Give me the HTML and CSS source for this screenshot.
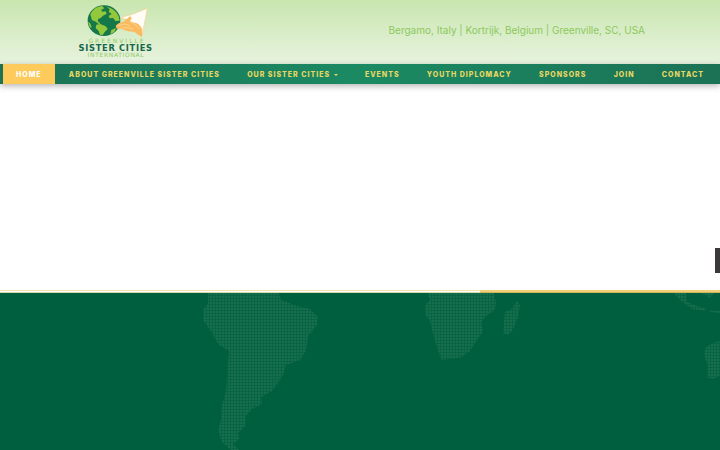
FILE: index.html
```html
<!DOCTYPE html>
<html lang="en">

<head>
    <meta charset="utf-8">
    <meta name="viewport" content="width=device-width, initial-scale=1">
    <title>Greenville Sister Cities International</title>
    <link rel="stylesheet" href="styles.css">
</head>

<body>

    <header class="header">
        <a class="logo" href="#" aria-label="Home page">
            <svg viewBox="12 0 264 192" width="88" height="64">
                <!-- Globe -->
                <ellipse cx="102" cy="62" rx="49" ry="46" fill="#15784a" />
                <g fill="#93c83d">
                    <path d="M61 43 Q73 19 96 18 L103 25 L94 29 L96 35 L107 34 L110 41 L99 47 L91 55 L85 56 L83 64 L91 70 L87 73 L75 64 L66 61 Z" />
                    <path d="M79 74 L91 72 L107 79 L113 87 L104 96 L98 105 L90 104 L86 93 L77 84 Z" />
                    <path d="M110 20 Q138 27 146 49 L149 62 L137 63 L129 54 L119 55 L116 48 L125 42 L116 35 L119 28 Z" />
                    <path d="M124 90 L139 84 L133 96 L121 103 Z" />
                    <path d="M54 66 L60 69 L65 81 L60 83 Z" />
                </g>
                <!-- Hands and cone -->
                <path d="M153 52 L184 44 L232 25 L217 104 L204 79 L184 65 Z" fill="#fffdf5" stroke="#f6cf8c" stroke-width="2" />
                <path d="M137 78 Q144 68 159 66 L178 50 Q186 47 184 56 L179 65 L199 69 Q213 76 217 90 L216 111 L204 104 L194 96 L175 94 L156 88 L140 86 Z" fill="#fabb60" />
                <path d="M143 77 L163 72 L180 77 M151 84 L174 83 L190 87 M181 66 L195 73 L207 86" fill="none" stroke="#fde0a5" stroke-width="2" />
                <!-- Wordmark -->
                <text class="logo-light" x="141" y="129">GREENVILLE</text>
                <text class="logo-bold" x="137" y="152">SISTER CITIES</text>
                <text class="logo-light logo-small" x="138" y="170">INTERNATIONAL</text>
            </svg>
        </a>
        <p class="tagline">Bergamo, Italy | Kortrijk, Belgium | Greenville, SC, USA</p>
    </header>

    <nav class="nav">
        <a class="nav-link active" href="#">Home</a>
        <a class="nav-link" href="#">About Greenville Sister Cities</a>
        <a class="nav-link" href="#">Our Sister Cities <span class="caret"></span></a>
        <a class="nav-link" href="#">Events</a>
        <a class="nav-link" href="#">Youth Diplomacy</a>
        <a class="nav-link" href="#">Sponsors</a>
        <a class="nav-link" href="#">Join</a>
        <a class="nav-link" href="#">Contact</a>
    </nav>

    <main class="slider">
        <button class="side-tab" type="button" aria-label="Open panel"></button>
    </main>

    <div class="divider">
        <div class="divider-light"></div>
        <div class="divider-gold"></div>
    </div>

    <footer class="footer">
        <svg class="map" viewBox="0 0 720 157" preserveAspectRatio="xMinYMin slice" aria-hidden="true">
            <defs>
                <pattern id="dots" width="3" height="3" patternUnits="userSpaceOnUse">
                    <rect width="3" height="3" fill="#086443" />
                    <rect width="2" height="2" fill="#186f4f" />
                </pattern>
            </defs>
            <g fill="url(#dots)">
                <!-- South America -->
                <path d="M208 0 H279 L281 7 L297 13 L310 16 L318 24 L317 32 L308 43 L306 58 L300 67 L286 72 L283 82 L277 91 L272 98 L261 104 L262 111 L252 116 L245 124 L246 132 L238 140 L239 146 L233 151 L239 157 H231 L222 149 L218 137 L221 127 L222 112 L226 98 L229 58 L218 51 L211 38 L203 27 L203 17 L208 10 Z" />
                <!-- Africa -->
                <path d="M428 0 H494 L496 9 L495 17 L486 23 L481 29 L483 38 L477 47 L470 58 L462 64 L442 67 L439 60 L435 48 L432 37 L430 28 L425 21 L425 12 L430 7 Z" />
                <!-- Madagascar -->
                <path d="M517 8 L520 12 L518 24 L512 38 L508 42 L503 40 L504 31 L505 19 L512 16 Z" />
                <!-- Indonesia and Australia -->
                <path d="M674 0 H686 L687 9 L697 13 L706 15 L705 18 L692 16 L681 8 Z M702 0 H714 L710 5 Z M709 17 L720 18 V20 L711 19 Z" />
                <path d="M720 48 L713 50 L706 54 L704 61 L708 74 L707 84 L713 86 L720 83 Z" />
            </g>
        </svg>
    </footer>

</body>

</html>
```
FILE: styles.css
```css
* {
    box-sizing: border-box;
}

body {
    display: flex;
    flex-direction: column;
    min-height: 100vh;
    margin: 0;
    background-color: #fff;
    font-family: Inter, "Open Sans", sans-serif;
}

/* Header */

.header {
    display: flex;
    align-items: center;
    justify-content: space-between;
    padding: 0 75px 0 74px;
    background: linear-gradient(#c8e6af, #e8f3df);
}

.logo svg {
    display: block;
}

.logo-bold,
.logo-light {
    font-family: "DejaVu Sans", sans-serif;
    text-anchor: middle;
}

.logo-bold {
    fill: #17674a;
    font-size: 25px;
    font-weight: 700;
    letter-spacing: 2px;
}

.logo-light {
    fill: #8fc963;
    font-size: 18px;
    letter-spacing: 6px;
}

.logo-small {
    letter-spacing: 2px;
}

.tagline {
    margin: 0;
    padding-bottom: 4px;
    color: #8cc95a;
    font-size: 10px;
    line-height: 16px;
}

/* Navigation */

.nav {
    position: relative;
    display: flex;
    justify-content: space-between;
    padding: 0 3px;
    background: linear-gradient(90deg, #1b7255, #1b8a63 50%, #1b7255);
    box-shadow: 0 2px 6px rgba(0, 0, 0, 0.3);
}

.nav-link {
    padding: 1px 13px 0;
    color: #e9d763;
    font-size: 7px;
    font-weight: 800;
    letter-spacing: 1px;
    line-height: 19px;
    text-decoration: none;
    text-transform: uppercase;
    white-space: nowrap;
}

.nav-link.active {
    background-color: #fdcb5c;
    color: #fff;
}

.caret {
    display: inline-block;
    margin-left: 1px;
    border-top: 2px solid;
    border-right: 2px solid transparent;
    border-left: 2px solid transparent;
    vertical-align: middle;
}

/* Slider */

.slider {
    position: relative;
    height: 206px;
}

.side-tab {
    position: absolute;
    top: 164px;
    right: 0;
    width: 5px;
    height: 25px;
    padding: 0;
    border: 0;
    background-color: #3b3a39;
}

.divider {
    display: flex;
    height: 3px;
}

.divider-light {
    flex: 2;
    border-top: 1px solid #f6e3b4;
    border-bottom: 1px solid #d5d7ac;
}

.divider-gold {
    flex: 1;
    border-bottom: 1px solid #cdb75a;
    background-color: #f3cf78;
}

/* Footer */

.footer {
    display: flex;
    flex: 1;
    background-color: #005f3f;
}

.map {
    display: block;
    width: 100%;
}
```
